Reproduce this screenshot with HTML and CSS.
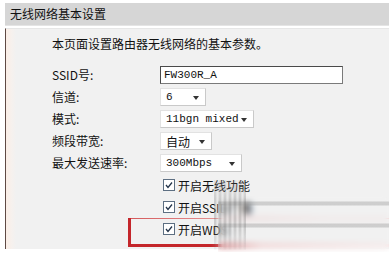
FILE: index.html
```html
<!DOCTYPE html>
<html lang="zh">
<head>
    <meta charset="UTF-8">
    <title>无线网络基本设置</title>
    <link rel="stylesheet" href="styles.css">
</head>
<body>
    <div class="panel">
        <div class="title">无线网络基本设置</div>
        <div class="content">
            <p class="desc">本页面设置路由器无线网络的基本参数。</p>

            <div class="form">
                <label>SSID号:</label>
                <div class="field"><span class="input ssid">FW300R_A</span></div>

                <label>信道:</label>
                <div class="field"><span class="select w46">6<i class="arrow"></i></span></div>

                <label>模式:</label>
                <div class="field"><span class="select w94">11bgn mixed<i class="arrow"></i></span></div>

                <label>频段带宽:</label>
                <div class="field"><span class="select w52 cjk">自动<i class="arrow"></i></span></div>

                <label>最大发送速率:</label>
                <div class="field"><span class="select w82">300Mbps<i class="arrow"></i></span></div>

                <span></span>
                <div class="check"><svg class="box" width="12" height="12" viewBox="0 0 12 12"><rect x="0.5" y="0.5" width="11" height="11" fill="#fff" stroke="#5d6f82"/><path d="M3 6l2 2.5 4-5" fill="none" stroke="#23344a" stroke-width="1.3"/></svg>开启无线功能</div>

                <span></span>
                <div class="check"><svg class="box" width="12" height="12" viewBox="0 0 12 12"><rect x="0.5" y="0.5" width="11" height="11" fill="#fff" stroke="#5d6f82"/><path d="M3 6l2 2.5 4-5" fill="none" stroke="#23344a" stroke-width="1.3"/></svg>开启SSID广播</div>

                <span></span>
                <div class="check"><svg class="box" width="12" height="12" viewBox="0 0 12 12"><rect x="0.5" y="0.5" width="11" height="11" fill="#fff" stroke="#5d6f82"/><path d="M3 6l2 2.5 4-5" fill="none" stroke="#23344a" stroke-width="1.3"/></svg>开启WDS</div>
            </div>
        </div>
    </div>

    <!-- 红框标注 和 模糊水印 -->
    <div class="mark"></div>
    <div class="blur"></div>
    <div class="stripes"></div>
</body>
</html>
```

FILE: styles.css
```css
body {
    margin: 0;
    background: #fff;
    font-family: "Noto Sans CJK SC", "DejaVu Sans", sans-serif;
    font-size: 12px;
    color: #111;
    width: 389px;
    height: 253px;
    overflow: hidden;
    position: relative;
}
.panel {
    margin: 3px 0 0 5px;
}
.title {
    height: 22px;
    line-height: 22px;
    padding-left: 5px;
    background: #d6d6d6;
    border-bottom: 1px solid #e4e4e4;
}
.content {
    margin-top: 2px;
    height: 221px;
    border-left: 1px solid #5e4a44;
    border-top: 1px solid #e6e6e6;
    background: linear-gradient(to right, #fbeee6 0, #f6f1ee 6px, #f1f1f1 10px, #f1f1f1 100%);
    padding: 7px 0 0 46px;
    box-sizing: border-box;
}
.desc {
    margin: 0;
    height: 16px;
    line-height: 16px;
}
.form {
    display: grid;
    grid-template-columns: 108px 1fr;
    grid-auto-rows: 22px;
    margin-top: 12px;
}
.form label {
    line-height: 22px;
}
.field {
    display: flex;
    align-items: center;
}
.input, .select {
    display: flex;
    align-items: center;
    height: 18px;
    box-sizing: border-box;
    background: #fff;
    font-family: "Liberation Mono", monospace;
    font-size: 11px;
    padding-left: 3px;
    position: relative;
}
.input {
    width: 183px;
    border: 1px solid #7a7a7a;
    border-top-color: #4a4a4a;
    border-left-color: #4a4a4a;
}
.select {
    border: 1px solid #e2e2e2;
    border-bottom-color: #c9c9c9;
    border-right-color: #c9c9c9;
    padding-left: 5px;
}
.select.cjk {
    font-family: "Noto Sans CJK SC", sans-serif;
    font-size: 12px;
}
.w46 { width: 46px; }
.w94 { width: 94px; }
.w52 { width: 52px; }
.w82 { width: 82px; }
.arrow {
    position: absolute;
    right: 6px;
    top: 7px;
    width: 0;
    height: 0;
    border-left: 3px solid transparent;
    border-right: 3px solid transparent;
    border-top: 4px solid #333;
}
.check {
    display: flex;
    align-items: center;
    padding-left: 3px;
}
.box {
    margin-right: 3px;
}
.mark {
    position: absolute;
    left: 128px;
    top: 218px;
    width: 280px;
    height: 29px;
    box-sizing: border-box;
    border-left: 3px solid #c4262b;
    background:
        linear-gradient(to right, #d55a5c 0, #e48f90 80px, #f3d2d2 200px) top / 100% 1px no-repeat,
        linear-gradient(to right, #c4262b 0, #c4262b 80px, #f0c4c4 130px, #f8e6e6 260px) bottom / 100% 3px no-repeat;
}
.blur {
    position: absolute;
    left: 218px;
    top: 196px;
    width: 171px;
    height: 56px;
    backdrop-filter: blur(3px);
    background: linear-gradient(to bottom, transparent 5px, rgba(140,140,140,0.35) 6px 9px, transparent 10px, transparent 27px, rgba(140,140,140,0.35) 28px 31px, transparent 32px);
}
.stripes {
    position: absolute;
    left: 214px;
    top: 180px;
    width: 32px;
    height: 70px;
    background: repeating-linear-gradient(to right, rgba(100,100,100,0.45) 0 2px, rgba(255,255,255,0.2) 2px 5px);
    filter: blur(0.8px);
    -webkit-mask-image: linear-gradient(to bottom, rgba(0,0,0,0.5), #000 30%, #000 70%, rgba(0,0,0,0.2));
}
```
